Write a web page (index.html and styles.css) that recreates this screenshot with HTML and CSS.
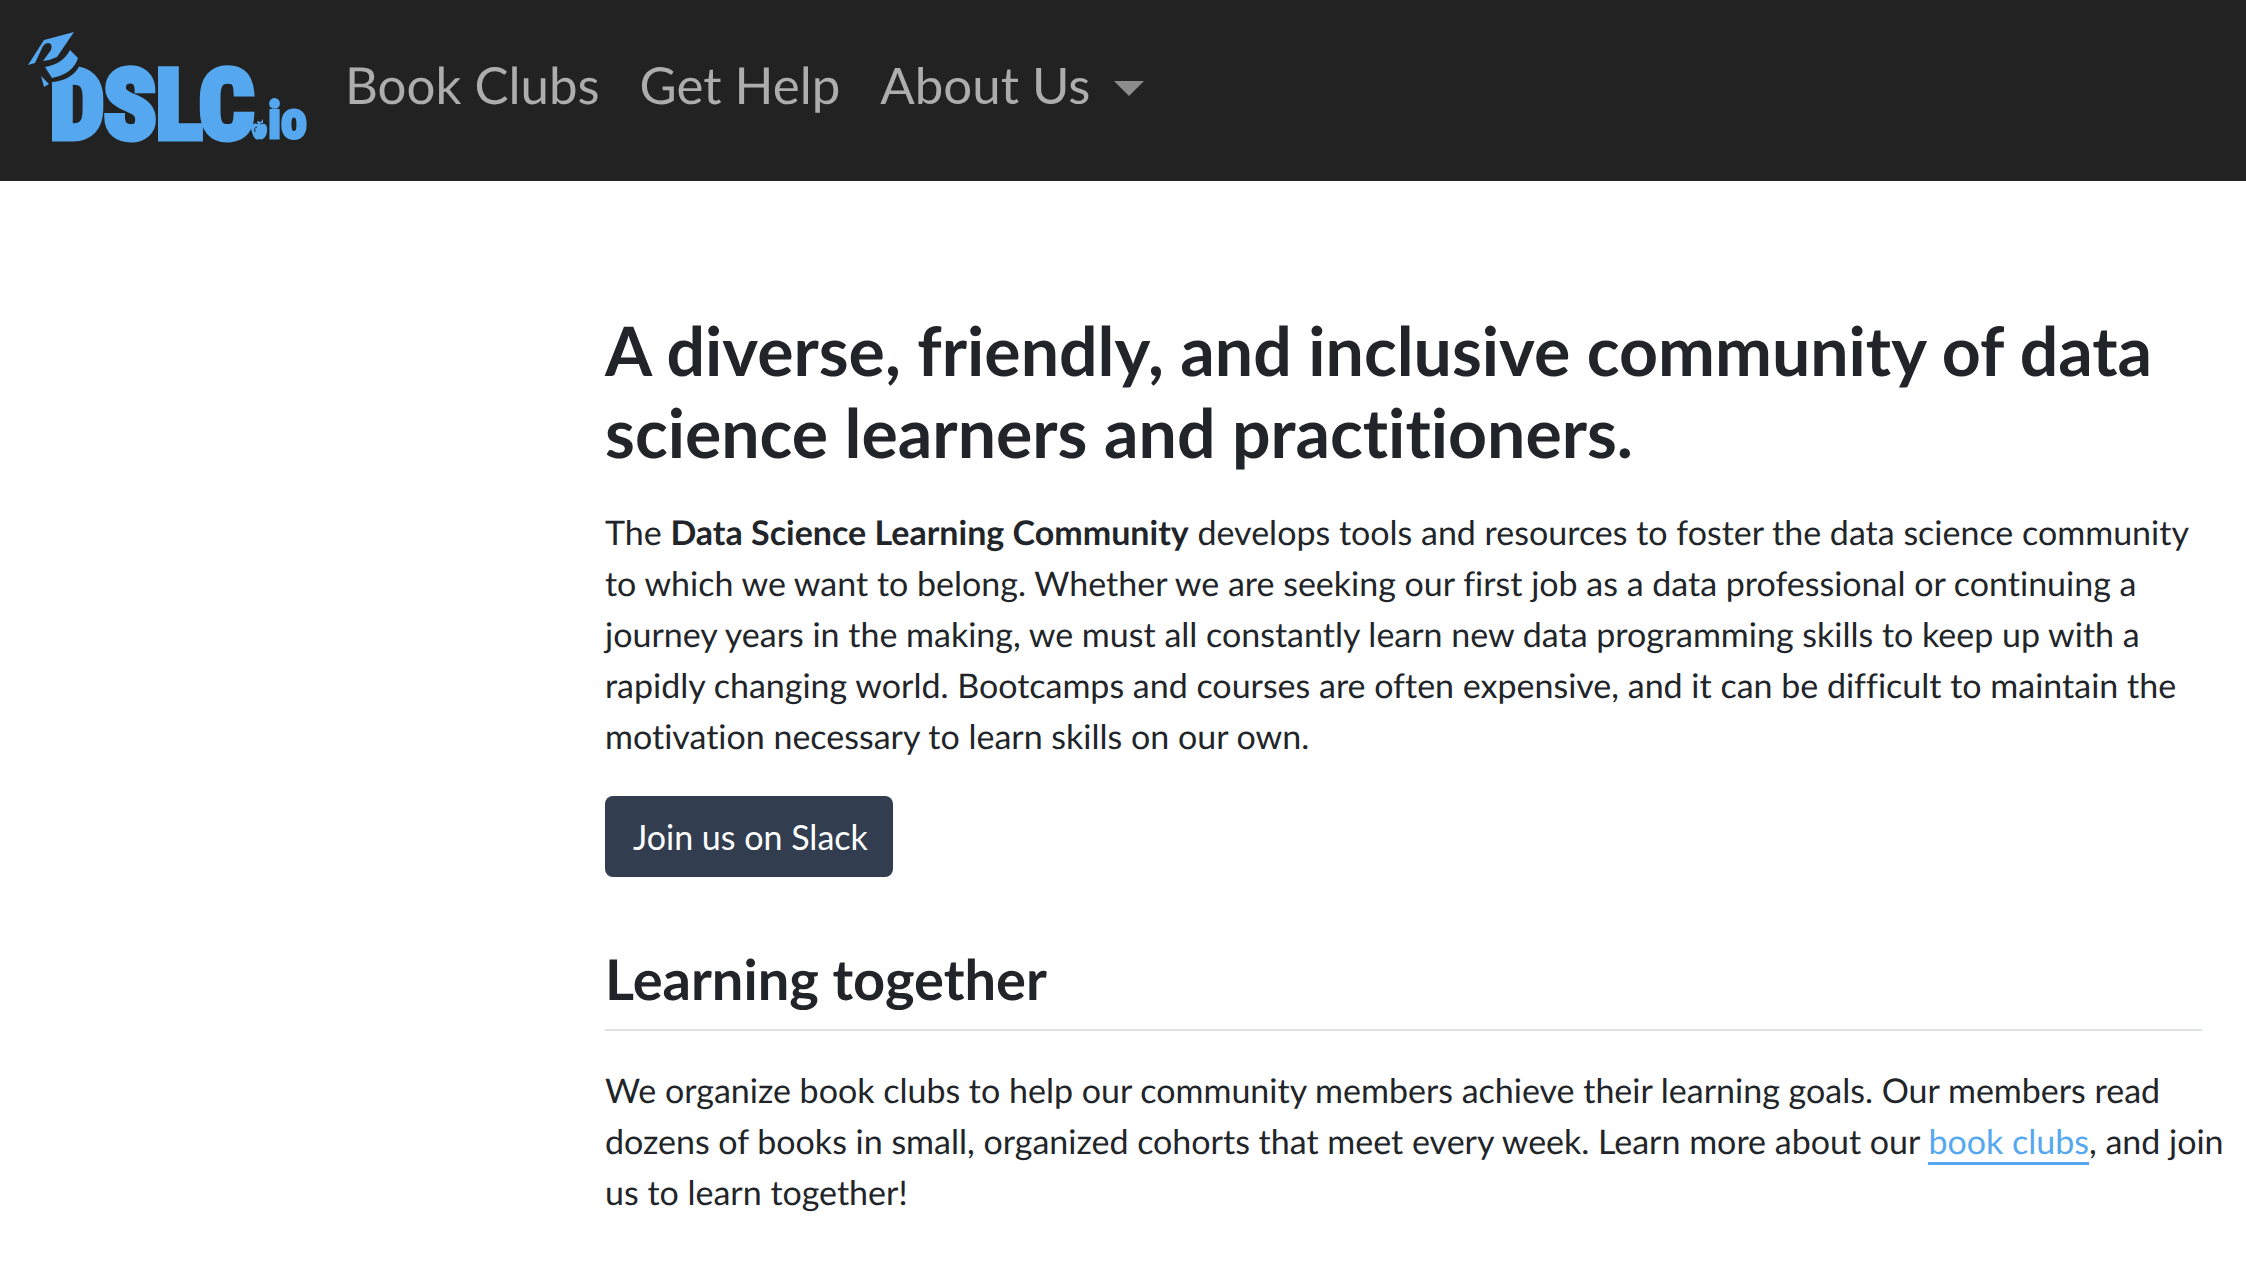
FILE: index.html
```html
<!DOCTYPE html>
<html lang="en">
<head>
<meta charset="utf-8">
<meta name="viewport" content="width=device-width, initial-scale=1">
<title>Data Science Learning Community</title>
<link rel="stylesheet" href="styles.css">
</head>
<body>
<header class="navbar">
  <a class="brand" href="#" aria-label="DSLC.io home">
    <svg class="logo" viewBox="24 26 288 124" width="288" height="124">
      <g class="logo-fill">
        <text class="logo-name" x="50" y="138">DSLC</text>
        <text class="logo-suffix" x="268" y="138">io</text>
      </g>
      <path class="logo-cut" d="M24 24H72L80 55C84 68 70 81 52 82L51 90H24Z"/>
      <g class="logo-fill">
        <path d="M28 65L44 40L74 32L57 57Q51 60 43 61L51 50Q53 43 48 43Q45 43 43 46L35 63Z"/>
        <path d="M45 67Q63 64 70 50L78 58Q73 74 52 78Z"/>
        <path d="M41 76L49 84L44 87Z"/>
        <path d="M259 125C254 121 249 125 252 132C253 137 256 141 259 139C263 141 267 136 267 131C268 124 264 122 259 125Z"/>
        <path d="M258 125L257 121L261 122L260 125ZM260 123L263 119L263 123Z"/>
      </g>
      <path class="logo-line" d="M257 127Q254 127 255 132"/>
    </svg>
  </a>
  <nav class="menu" aria-label="Main">
    <a class="menu-item" href="#">Book Clubs</a>
    <a class="menu-item" href="#">Get Help</a>
    <button class="menu-item" type="button" aria-haspopup="true">About Us<span class="caret"></span></button>
  </nav>
</header>
<main class="content">
  <h1>A diverse, friendly, and inclusive community of data science learners and practitioners.</h1>
  <p>The <strong>Data Science Learning Community</strong> develops tools and resources to foster the data science community to which we want to belong. Whether we are seeking our first job as a data professional or continuing a journey years in the making, we must all constantly learn new data programming skills to keep up with a rapidly changing world. Bootcamps and courses are often expensive, and it can be difficult to maintain the motivation necessary to learn skills on our own.</p>
  <button class="join" type="button">Join us on Slack</button>
  <h2>Learning together</h2>
  <p class="section-text">We organize book clubs to help our community members achieve their learning goals. Our members read dozens of books in small, organized cohorts that meet every week. Learn more about our <a class="link" href="#">book clubs</a>, and join us to learn together!</p>
</main>
</body>
</html>
```
FILE: styles.css
```css
* { box-sizing: border-box; }

body {
  margin: 0;
  background: #fff;
  color: #212529;
  font-family: Lato, "Liberation Sans", sans-serif;
  font-size: 34px;
  font-variant-ligatures: none;
  line-height: 51px;
  text-rendering: geometricPrecision;
}

.navbar {
  display: flex;
  align-items: center;
  min-height: 181px;
  padding: 0 24px 5px;
  background: #222;
}

.brand { display: flex; }
.logo { display: block; overflow: visible; }
.logo-fill { fill: #55a8ef; }
.logo-name,
.logo-suffix {
  font-family: "Liberation Sans Narrow", "Roboto Condensed", "DejaVu Sans Condensed", sans-serif;
  font-weight: 700;
  stroke: #55a8ef;
}
.logo-name { font-size: 96px; stroke-width: 7px; }
.logo-suffix { font-size: 52px; stroke-width: 3px; }
.logo-cut { fill: #222; }
.logo-line { fill: none; stroke: #222; stroke-width: 1px; }

.menu { display: flex; padding: 0 0 6px 13px; }
.menu-item {
  display: flex;
  align-items: center;
  padding: 0 20px;
  border: 0;
  background: none;
  color: #adadad;
  font: inherit;
  font-size: 51px;
  line-height: 62px;
  text-decoration: none;
}
.caret {
  margin: 6px 0 0 24px;
  border: solid transparent;
  border-width: 15px 15px 0;
  border-top-color: #8c8c8c;
}

.content {
  margin-left: 605px;
  margin-right: 44px;
  padding-top: 129px;
}
h1 { margin: 0 0 33px; font-size: 68px; line-height: 82px; }
p { margin: 0 0 34px; }
.section-text { margin-right: -32px; }
h2 {
  margin: 68px 0 34px;
  padding-bottom: 17px;
  border-bottom: 2px solid #dee2e6;
  font-size: 56px;
  line-height: 67px;
}

.join {
  display: block;
  padding: 15px 25px 15px 28px;
  border: 0;
  border-radius: 8px;
  background: #323e50;
  color: #fff;
  font: inherit;
}
.link {
  border-bottom: 3px solid #55a8ef;
  color: #55a8ef;
  text-decoration: none;
}
```
